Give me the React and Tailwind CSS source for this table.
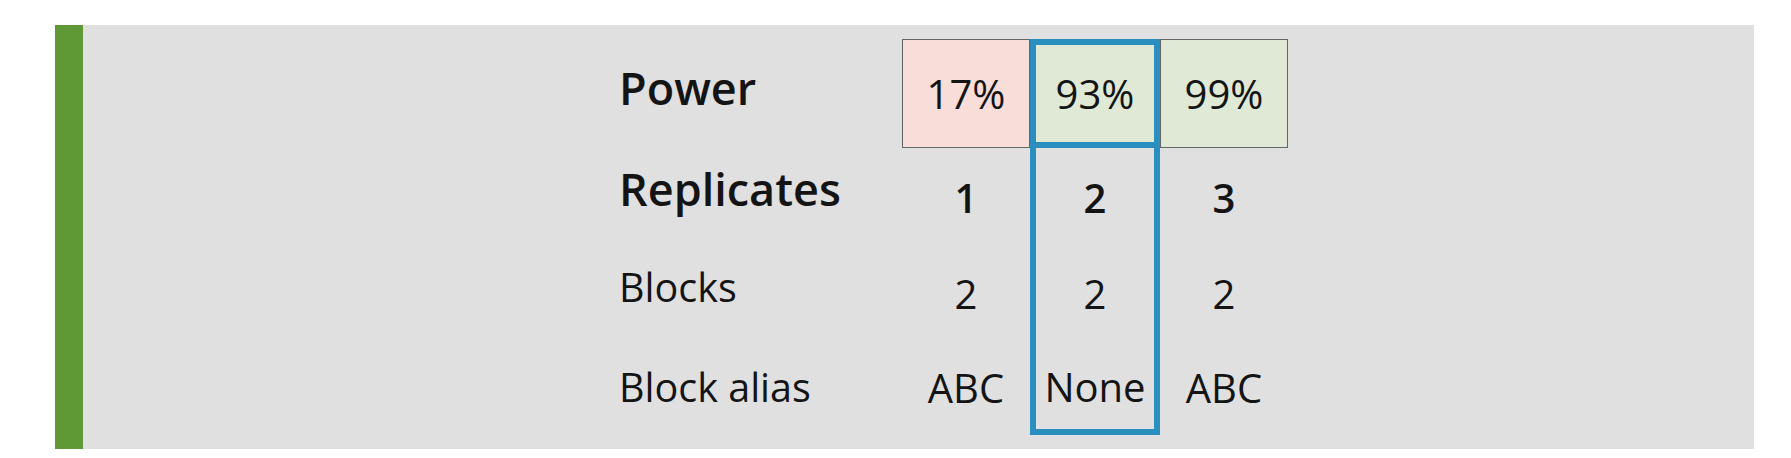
import React from 'react';

/**
 * PowerTable
 * Replicate options with their power, the chosen option boxed in blue.
 */
const rows = [
  { label: 'Power', h: 'h-[109px]', lab: 'pb-3 font-semibold text-[45px]' },
  { label: 'Replicates', h: 'h-[96px]', lab: 'pb-4 font-semibold text-[45px]' },
  { label: 'Blocks', h: 'h-[96px]', lab: 'pb-2 text-[39.5px]' },
  { label: 'Block alias', h: 'h-[95px]', lab: 'text-[39.5px]' },
];

const options = [
  { power: '17%', tone: 'bg-[#f8ddd9]', replicates: '1', blocks: '2', alias: 'ABC' },
  { power: '93%', tone: 'bg-[#dfe9d6]', replicates: '2', blocks: '2', alias: 'None', selected: true },
  { power: '99%', tone: 'bg-[#dfe9d6]', replicates: '3', blocks: '2', alias: 'ABC' },
];

const OptionColumn = ({ opt }) => {
  if (opt.selected) {
    return (
      <div className="w-[130px] flex flex-col border-[6px] border-[#2a8fbe]">
        <div className={`h-[103px] flex items-center justify-center border-b-[6px] border-[#2a8fbe] ${opt.tone}`}>
          <span className="text-[40px] leading-none">{opt.power}</span>
        </div>
        <div className="h-[96px] flex items-center justify-center pt-1 font-semibold text-[40px] leading-none">{opt.replicates}</div>
        <div className="h-[96px] flex items-center justify-center pt-1 text-[40px] leading-none">{opt.blocks}</div>
        <div className="h-[89px] flex items-center justify-center pt-[5px] text-[40px] leading-none">{opt.alias}</div>
      </div>
    );
  }
  return (
    <div className="w-[128px] flex flex-col">
      <div className={`h-[109px] flex items-center justify-center border border-[#666666] ${opt.tone}`}>
        <span className="text-[40px] leading-none">{opt.power}</span>
      </div>
      <div className="h-[96px] flex items-center justify-center pt-1 font-semibold text-[40px] leading-none">{opt.replicates}</div>
      <div className="h-[96px] flex items-center justify-center pt-1 text-[40px] leading-none">{opt.blocks}</div>
      <div className="h-[95px] flex items-center justify-center text-[40px] leading-none">{opt.alias}</div>
    </div>
  );
};

export default function App() {
  return (
    <div className="w-[1791px] h-[458px] bg-white pt-[25px] pl-[55px] text-[#141414]" style={{ fontFamily: '"Open Sans", "Noto Sans", sans-serif' }}>
      <div className="w-[1699px] h-[424px] flex bg-[#e0e0e0]">
        <div className="w-[28px] bg-[#5e9935]"></div>
        <div className="flex items-start pl-[536px] pt-[14px]">
          {/* row labels */}
          <div className="w-[283px] flex flex-col">
            {rows.map((r) => (
              <div key={r.label} className={`${r.h} flex items-center`}>
                <span className={`${r.lab} leading-none`}>{r.label}</span>
              </div>
            ))}
          </div>
          {/* option columns */}
          {options.map((opt) => (
            <OptionColumn key={opt.power} opt={opt} />
          ))}
        </div>
      </div>
    </div>
  );
}
